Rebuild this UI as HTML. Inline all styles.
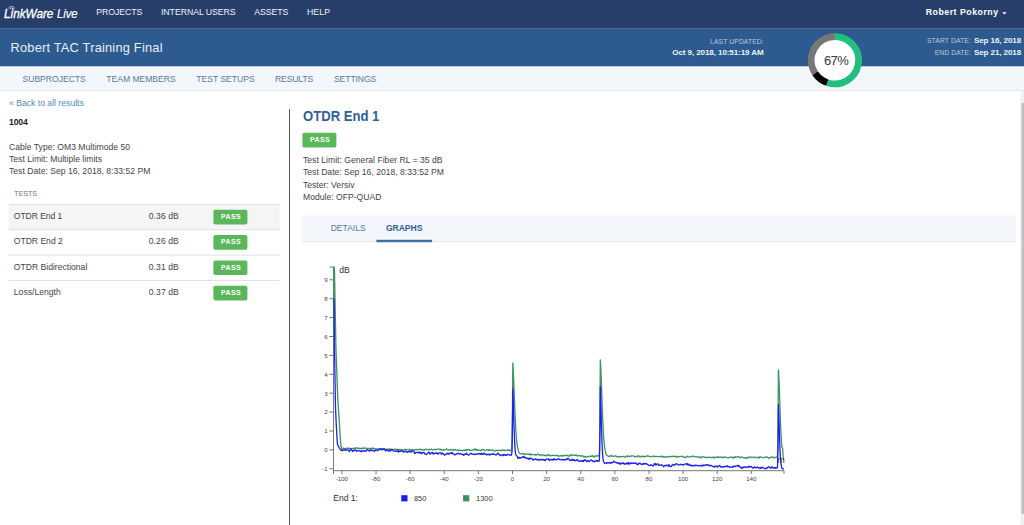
<!DOCTYPE html><html><head><meta charset="utf-8"><title>LinkWare Live</title><style>
html,body{margin:0;padding:0}
body{width:1024px;height:525px;overflow:hidden;background:#fff;position:relative;font-family:"Liberation Sans", sans-serif;}
.t{position:absolute;display:block;white-space:nowrap;line-height:1;margin:0;padding:0}
header,section,nav,aside,main,figure{display:block;margin:0;padding:0;position:static}
.b{position:absolute}

</style></head><body>
<svg class="b" style="left:0;top:0" width="1024" height="525" viewBox="0 0 1024 525" shape-rendering="geometricPrecision"><rect x="0.00" y="0.00" width="1024.00" height="28.75" fill="#283e6a"/><rect x="0.00" y="28.75" width="1024.00" height="37.65" fill="#2d5b8f"/><rect x="0.00" y="65.60" width="1024.00" height="0.80" fill="#2a568a"/><rect x="0.00" y="66.40" width="1024.00" height="23.80" fill="#f3f6fa"/><rect x="0.00" y="90.20" width="1024.00" height="0.80" fill="#dde3ed"/><rect x="1020.60" y="91.00" width="3.40" height="434.00" fill="#f1f1f1"/><rect x="1021.40" y="103.10" width="2.60" height="410.90" fill="#c2c0c0"/><rect x="289.05" y="109.10" width="0.95" height="415.90" fill="#4a4a4a"/><rect x="8.80" y="204.50" width="271.00" height="25.30" fill="#f5f5f5"/><rect x="8.80" y="204.10" width="271.00" height="0.80" fill="#dadada"/><rect x="8.80" y="229.40" width="271.00" height="0.80" fill="#dadada"/><rect x="8.80" y="254.70" width="271.00" height="0.80" fill="#dadada"/><rect x="8.80" y="280.00" width="271.00" height="0.80" fill="#dadada"/><rect x="213.40" y="209.80" width="34.00" height="14.70" fill="#5bb75b" rx="1.8"/><rect x="213.40" y="235.10" width="34.00" height="14.70" fill="#5bb75b" rx="1.8"/><rect x="213.40" y="260.40" width="34.00" height="14.70" fill="#5bb75b" rx="1.8"/><rect x="213.40" y="285.70" width="34.00" height="14.70" fill="#5bb75b" rx="1.8"/><rect x="302.40" y="132.80" width="34.00" height="14.70" fill="#5bb75b" rx="1.8"/><rect x="302.30" y="215.50" width="713.80" height="25.80" fill="#f3f6fa"/><rect x="302.30" y="241.30" width="713.80" height="0.70" fill="#dde3ed"/><rect x="376.40" y="239.80" width="55.70" height="2.40" fill="#3d6fa6"/></svg>
<svg class="b" style="left:0;top:0" width="1024" height="525" viewBox="0 0 1024 525"><circle cx="834.9" cy="60.2" r="26.5" fill="#fff"/><path d="M834.90 36.55 A23.65 23.65 0 1 1 827.20 82.56" fill="none" stroke="#21bf7f" stroke-width="6.7"/><path d="M827.20 82.56 A23.65 23.65 0 0 1 815.07 73.08" fill="none" stroke="#000" stroke-width="6.7"/><path d="M815.07 73.08 A23.65 23.65 0 0 1 834.90 36.55" fill="none" stroke="#777" stroke-width="6.7"/><path d="M1002.2 12.3 L1006.6 12.3 L1004.4 14.6 Z" fill="#fff"/><path d="M8.3 8.4 Q11.6 4.4 14.9 8.4" fill="none" stroke="#fff" stroke-opacity="0.85" stroke-width="0.8"/><path d="M9.7 9.1 Q11.6 6.7 13.5 9.1" fill="none" stroke="#fff" stroke-opacity="0.85" stroke-width="0.8"/><path d="M333.5 267 V471 M333.5 470.7 H784" stroke="#777" stroke-width="1" fill="none"/><path d="M329.3 468.8 H333.5 M329.3 449.9 H333.5 M329.3 431.0 H333.5 M329.3 412.1 H333.5 M329.3 393.2 H333.5 M329.3 374.3 H333.5 M329.3 355.4 H333.5 M329.3 336.5 H333.5 M329.3 317.6 H333.5 M329.3 298.7 H333.5 M329.3 279.8 H333.5 M329.5 267 H333.5 M341.9 470.7 V474 M376.0 470.7 V474 M410.1 470.7 V474 M444.3 470.7 V474 M478.4 470.7 V474 M512.5 470.7 V474 M546.6 470.7 V474 M580.7 470.7 V474 M614.9 470.7 V474 M649.0 470.7 V474 M683.1 470.7 V474 M717.2 470.7 V474 M751.3 470.7 V474 M784 470.7 V474 M333.5 470.7 V474" stroke="#777" stroke-width="1" fill="none"/><path d="M333.9 335.0 L333.9 267.0 L334.0 267.0 L334.5 270.0 L335.0 300.0 L335.5 325.0 L336.0 350.0 L336.5 364.1 L337.0 378.1 L337.5 392.2 L338.0 401.3 L338.5 409.2 L339.0 417.1 L339.5 425.0 L340.0 432.9 L340.5 440.8 L341.0 446.1 L341.5 447.5 L342.0 449.5 L342.5 449.4 L343.0 448.0 L343.5 448.2 L344.0 448.5 L344.5 448.6 L345.0 448.7 L345.5 448.6 L346.0 448.2 L346.5 448.3 L347.0 448.3 L347.5 448.3 L348.0 448.1 L348.5 448.5 L349.0 448.4 L349.5 448.2 L350.0 448.3 L350.5 448.5 L351.0 448.7 L351.5 449.2 L352.0 448.8 L352.5 448.5 L353.0 448.3 L353.5 448.4 L354.0 448.0 L354.5 448.5 L355.0 448.4 L355.5 448.3 L356.0 447.6 L356.5 447.9 L357.0 448.2 L357.5 448.4 L358.0 448.1 L358.5 448.2 L359.0 448.5 L359.5 448.2 L360.0 449.0 L360.5 448.7 L361.0 448.2 L361.5 448.4 L362.0 448.7 L362.5 448.3 L363.0 448.2 L363.5 448.6 L364.0 447.8 L364.5 448.1 L365.0 448.2 L365.5 448.6 L366.0 448.3 L366.5 448.1 L367.0 448.9 L367.5 449.0 L368.0 448.6 L368.5 448.4 L369.0 448.6 L369.5 448.4 L370.0 448.7 L370.5 449.0 L371.0 448.3 L371.5 448.7 L372.0 448.6 L372.5 447.9 L373.0 448.7 L373.5 448.3 L374.0 449.1 L374.5 449.2 L375.0 448.6 L375.5 448.8 L376.0 448.9 L376.5 448.9 L377.0 449.2 L377.5 448.6 L378.0 449.2 L378.5 448.9 L379.0 449.3 L379.5 449.6 L380.0 449.0 L380.5 448.4 L381.0 448.8 L381.5 449.1 L382.0 449.7 L382.5 449.0 L383.0 448.6 L383.5 449.1 L384.0 449.3 L384.5 449.9 L385.0 449.7 L385.5 449.6 L386.0 449.3 L386.5 448.9 L387.0 449.7 L387.5 449.6 L388.0 449.2 L388.5 449.0 L389.0 448.9 L389.5 449.4 L390.0 449.0 L390.5 448.9 L391.0 449.5 L391.5 449.5 L392.0 449.7 L392.5 449.4 L393.0 449.7 L393.5 449.7 L394.0 449.2 L394.5 449.2 L395.0 449.2 L395.5 449.4 L396.0 449.5 L396.5 449.3 L397.0 449.3 L397.5 449.3 L398.0 449.2 L398.5 449.6 L399.0 449.9 L399.5 449.6 L400.0 449.7 L400.5 449.9 L401.0 449.4 L401.5 449.6 L402.0 449.6 L402.5 449.8 L403.0 450.2 L403.5 450.4 L404.0 449.9 L404.5 449.4 L405.0 449.2 L405.5 450.0 L406.0 450.1 L406.5 449.6 L407.0 449.3 L407.5 449.7 L408.0 450.0 L408.5 450.3 L409.0 449.9 L409.5 449.0 L410.0 449.9 L410.5 450.1 L411.0 449.8 L411.5 449.4 L412.0 450.1 L412.5 450.0 L413.0 449.9 L413.5 449.8 L414.0 450.0 L414.5 449.7 L415.0 450.2 L415.5 449.8 L416.0 449.4 L416.5 449.5 L417.0 449.4 L417.5 449.6 L418.0 449.9 L418.5 449.6 L419.0 449.7 L419.5 449.4 L420.0 449.3 L420.5 449.1 L421.0 449.5 L421.5 450.0 L422.0 449.9 L422.5 449.4 L423.0 450.0 L423.5 450.2 L424.0 450.0 L424.5 450.2 L425.0 449.3 L425.5 449.5 L426.0 449.3 L426.5 449.3 L427.0 449.7 L427.5 449.5 L428.0 449.4 L428.5 449.5 L429.0 449.5 L429.5 449.7 L430.0 449.9 L430.5 449.3 L431.0 449.1 L431.5 449.2 L432.0 449.7 L432.5 449.8 L433.0 449.8 L433.5 449.4 L434.0 449.7 L434.5 449.4 L435.0 449.4 L435.5 449.6 L436.0 449.5 L436.5 449.7 L437.0 449.2 L437.5 449.2 L438.0 449.1 L438.5 449.2 L439.0 449.1 L439.5 449.2 L440.0 449.7 L440.5 449.3 L441.0 449.8 L441.5 449.5 L442.0 450.1 L442.5 450.3 L443.0 449.9 L443.5 449.7 L444.0 450.0 L444.5 450.0 L445.0 449.7 L445.5 449.3 L446.0 449.4 L446.5 448.8 L447.0 449.7 L447.5 449.8 L448.0 450.1 L448.5 449.9 L449.0 450.1 L449.5 449.7 L450.0 449.8 L450.5 449.7 L451.0 449.8 L451.5 449.4 L452.0 449.9 L452.5 450.2 L453.0 450.5 L453.5 449.7 L454.0 449.7 L454.5 450.0 L455.0 449.9 L455.5 449.5 L456.0 450.1 L456.5 450.2 L457.0 450.3 L457.5 450.4 L458.0 450.0 L458.5 450.5 L459.0 450.1 L459.5 450.3 L460.0 450.6 L460.5 450.7 L461.0 450.1 L461.5 450.4 L462.0 450.3 L462.5 450.8 L463.0 450.5 L463.5 450.2 L464.0 450.3 L464.5 450.1 L465.0 450.5 L465.5 449.9 L466.0 449.6 L466.5 449.8 L467.0 450.5 L467.5 449.6 L468.0 449.6 L468.5 449.6 L469.0 449.9 L469.5 449.7 L470.0 450.3 L470.5 450.3 L471.0 450.5 L471.5 450.3 L472.0 450.2 L472.5 450.1 L473.0 449.6 L473.5 450.2 L474.0 450.1 L474.5 449.2 L475.0 448.8 L475.5 449.6 L476.0 449.4 L476.5 450.4 L477.0 450.3 L477.5 449.5 L478.0 449.9 L478.5 450.2 L479.0 450.1 L479.5 450.2 L480.0 450.5 L480.5 450.5 L481.0 450.6 L481.5 450.3 L482.0 449.4 L482.5 449.8 L483.0 449.4 L483.5 449.7 L484.0 450.0 L484.5 450.3 L485.0 450.7 L485.5 450.5 L486.0 450.2 L486.5 449.7 L487.0 449.8 L487.5 449.9 L488.0 450.1 L488.5 450.3 L489.0 449.7 L489.5 450.4 L490.0 450.4 L490.5 450.1 L491.0 450.2 L491.5 450.0 L492.0 450.0 L492.5 450.1 L493.0 450.4 L493.5 450.3 L494.0 451.0 L494.5 450.9 L495.0 450.8 L495.5 450.9 L496.0 450.1 L496.5 450.1 L497.0 450.6 L497.5 450.7 L498.0 450.6 L498.5 450.3 L499.0 450.1 L499.5 450.4 L500.0 450.4 L500.5 450.7 L501.0 450.6 L501.5 450.7 L502.0 449.9 L502.5 449.9 L503.0 450.1 L503.5 450.4 L504.0 449.9 L504.5 450.1 L505.0 450.4 L505.5 450.6 L506.0 450.3 L506.5 450.3 L507.0 450.2 L507.5 449.9 L508.0 450.0 L508.5 449.8 L509.0 450.5 L509.5 450.0 L510.0 450.2 L510.5 450.9 L511.0 450.6 L511.5 450.7 L512.0 445.8 L512.5 407.6 L512.8 363.0 L513.0 365.1 L513.5 375.0 L514.0 388.0 L514.5 401.2 L515.0 413.8 L515.5 424.4 L516.0 432.8 L516.5 439.2 L517.0 443.8 L517.5 447.1 L518.0 449.1 L518.5 451.5 L519.0 452.3 L519.5 453.1 L520.0 453.7 L520.5 453.9 L521.0 453.8 L521.5 454.0 L522.0 453.7 L522.5 453.4 L523.0 453.7 L523.5 453.5 L524.0 454.5 L524.5 454.2 L525.0 454.1 L525.5 454.0 L526.0 454.3 L526.5 454.2 L527.0 453.9 L527.5 454.1 L528.0 454.1 L528.5 454.1 L529.0 454.0 L529.5 455.0 L530.0 454.9 L530.5 453.9 L531.0 454.1 L531.5 454.7 L532.0 454.6 L532.5 454.7 L533.0 454.3 L533.5 454.7 L534.0 454.8 L534.5 454.6 L535.0 454.7 L535.5 454.5 L536.0 455.4 L536.5 455.2 L537.0 454.6 L537.5 454.1 L538.0 454.2 L538.5 454.3 L539.0 454.7 L539.5 455.2 L540.0 454.7 L540.5 454.8 L541.0 454.9 L541.5 455.0 L542.0 455.1 L542.5 455.6 L543.0 455.0 L543.5 455.2 L544.0 455.0 L544.5 455.6 L545.0 455.7 L545.5 455.1 L546.0 455.9 L546.5 455.4 L547.0 455.0 L547.5 455.3 L548.0 455.6 L548.5 454.5 L549.0 454.9 L549.5 455.4 L550.0 455.6 L550.5 455.6 L551.0 455.8 L551.5 455.6 L552.0 455.6 L552.5 455.1 L553.0 455.4 L553.5 455.4 L554.0 455.4 L554.5 455.8 L555.0 455.5 L555.5 455.4 L556.0 455.3 L556.5 455.3 L557.0 455.6 L557.5 455.3 L558.0 456.0 L558.5 455.9 L559.0 456.0 L559.5 456.0 L560.0 456.2 L560.5 455.5 L561.0 455.9 L561.5 455.6 L562.0 455.9 L562.5 455.5 L563.0 456.2 L563.5 455.9 L564.0 455.5 L564.5 455.3 L565.0 455.7 L565.5 455.3 L566.0 455.1 L566.5 455.6 L567.0 455.3 L567.5 455.6 L568.0 455.4 L568.5 456.0 L569.0 456.1 L569.5 456.1 L570.0 455.1 L570.5 454.7 L571.0 455.4 L571.5 455.7 L572.0 454.9 L572.5 455.1 L573.0 454.8 L573.5 455.2 L574.0 455.2 L574.5 455.3 L575.0 455.5 L575.5 455.3 L576.0 454.7 L576.5 455.3 L577.0 455.8 L577.5 456.0 L578.0 455.8 L578.5 455.6 L579.0 455.4 L579.5 455.7 L580.0 455.9 L580.5 456.1 L581.0 456.0 L581.5 456.0 L582.0 455.5 L582.5 455.9 L583.0 456.3 L583.5 456.2 L584.0 457.1 L584.5 456.4 L585.0 456.5 L585.5 457.0 L586.0 457.0 L586.5 457.2 L587.0 456.7 L587.5 456.7 L588.0 456.6 L588.5 456.5 L589.0 456.5 L589.5 456.2 L590.0 456.5 L590.5 455.9 L591.0 456.3 L591.5 456.3 L592.0 456.2 L592.5 455.6 L593.0 456.3 L593.5 456.8 L594.0 456.4 L594.5 457.0 L595.0 456.1 L595.5 455.8 L596.0 456.0 L596.5 456.0 L597.0 456.1 L597.5 455.7 L598.0 456.1 L598.5 456.2 L599.0 455.5 L599.5 451.5 L600.0 411.6 L600.3 359.9 L600.5 362.0 L601.0 372.3 L601.5 386.1 L602.0 400.7 L602.5 413.8 L603.0 425.3 L603.5 434.4 L604.0 441.3 L604.5 446.4 L605.0 449.7 L605.5 452.0 L606.0 454.0 L606.5 455.0 L607.0 455.4 L607.5 455.9 L608.0 455.9 L608.5 456.4 L609.0 456.7 L609.5 456.2 L610.0 456.2 L610.5 455.9 L611.0 456.1 L611.5 455.3 L612.0 456.1 L612.5 456.2 L613.0 456.5 L613.5 456.3 L614.0 456.0 L614.5 456.1 L615.0 456.2 L615.5 455.8 L616.0 455.9 L616.5 456.5 L617.0 456.8 L617.5 456.6 L618.0 456.9 L618.5 456.8 L619.0 456.5 L619.5 457.0 L620.0 456.9 L620.5 456.4 L621.0 456.4 L621.5 456.6 L622.0 457.0 L622.5 456.7 L623.0 456.5 L623.5 456.3 L624.0 456.5 L624.5 456.9 L625.0 457.4 L625.5 456.9 L626.0 456.3 L626.5 456.7 L627.0 456.6 L627.5 455.8 L628.0 456.5 L628.5 456.4 L629.0 456.2 L629.5 456.1 L630.0 456.6 L630.5 456.5 L631.0 455.9 L631.5 456.0 L632.0 455.8 L632.5 455.9 L633.0 455.8 L633.5 456.2 L634.0 456.2 L634.5 456.8 L635.0 456.5 L635.5 456.9 L636.0 456.5 L636.5 456.3 L637.0 456.6 L637.5 456.6 L638.0 455.5 L638.5 456.0 L639.0 456.1 L639.5 456.5 L640.0 457.2 L640.5 457.1 L641.0 456.4 L641.5 456.1 L642.0 456.4 L642.5 456.6 L643.0 456.3 L643.5 456.2 L644.0 456.8 L644.5 457.0 L645.0 456.6 L645.5 456.3 L646.0 456.2 L646.5 456.1 L647.0 456.3 L647.5 455.8 L648.0 455.9 L648.5 456.2 L649.0 456.4 L649.5 456.4 L650.0 456.3 L650.5 456.8 L651.0 456.7 L651.5 456.7 L652.0 456.3 L652.5 456.4 L653.0 456.4 L653.5 456.6 L654.0 455.9 L654.5 456.3 L655.0 456.5 L655.5 456.6 L656.0 456.3 L656.5 456.4 L657.0 456.5 L657.5 456.6 L658.0 456.7 L658.5 456.8 L659.0 456.5 L659.5 456.5 L660.0 456.7 L660.5 456.5 L661.0 456.5 L661.5 456.5 L662.0 456.0 L662.5 456.8 L663.0 456.4 L663.5 457.0 L664.0 456.7 L664.5 457.2 L665.0 456.9 L665.5 457.0 L666.0 457.2 L666.5 456.7 L667.0 456.9 L667.5 456.8 L668.0 457.0 L668.5 456.5 L669.0 456.5 L669.5 456.7 L670.0 456.3 L670.5 456.6 L671.0 456.6 L671.5 456.8 L672.0 456.4 L672.5 456.1 L673.0 456.7 L673.5 456.7 L674.0 456.4 L674.5 456.2 L675.0 456.4 L675.5 456.3 L676.0 457.1 L676.5 457.1 L677.0 456.4 L677.5 456.9 L678.0 457.1 L678.5 456.9 L679.0 456.6 L679.5 456.6 L680.0 456.3 L680.5 456.5 L681.0 456.4 L681.5 456.4 L682.0 456.6 L682.5 456.2 L683.0 456.6 L683.5 457.1 L684.0 457.4 L684.5 457.7 L685.0 457.0 L685.5 457.2 L686.0 457.1 L686.5 457.1 L687.0 456.4 L687.5 456.2 L688.0 456.8 L688.5 456.9 L689.0 456.9 L689.5 456.8 L690.0 456.8 L690.5 456.9 L691.0 456.7 L691.5 456.3 L692.0 456.1 L692.5 456.4 L693.0 456.1 L693.5 456.3 L694.0 456.4 L694.5 456.5 L695.0 456.7 L695.5 456.8 L696.0 457.0 L696.5 456.7 L697.0 457.1 L697.5 457.2 L698.0 456.9 L698.5 456.7 L699.0 457.0 L699.5 457.0 L700.0 457.8 L700.5 457.4 L701.0 457.5 L701.5 457.6 L702.0 456.7 L702.5 456.5 L703.0 456.8 L703.5 457.0 L704.0 456.9 L704.5 457.1 L705.0 457.5 L705.5 457.5 L706.0 457.3 L706.5 457.3 L707.0 457.8 L707.5 457.2 L708.0 457.5 L708.5 457.4 L709.0 457.3 L709.5 457.1 L710.0 457.4 L710.5 457.4 L711.0 457.6 L711.5 457.7 L712.0 457.4 L712.5 457.5 L713.0 457.3 L713.5 457.1 L714.0 457.0 L714.5 458.2 L715.0 457.5 L715.5 457.7 L716.0 457.4 L716.5 456.9 L717.0 457.4 L717.5 457.3 L718.0 456.7 L718.5 457.5 L719.0 457.4 L719.5 457.2 L720.0 457.1 L720.5 457.4 L721.0 457.4 L721.5 457.0 L722.0 457.0 L722.5 457.7 L723.0 457.4 L723.5 457.7 L724.0 457.3 L724.5 457.2 L725.0 456.9 L725.5 457.2 L726.0 457.2 L726.5 457.5 L727.0 457.6 L727.5 457.9 L728.0 457.9 L728.5 457.8 L729.0 457.4 L729.5 457.1 L730.0 457.2 L730.5 457.4 L731.0 457.5 L731.5 457.3 L732.0 457.5 L732.5 457.1 L733.0 457.4 L733.5 458.2 L734.0 457.5 L734.5 457.5 L735.0 456.5 L735.5 457.4 L736.0 457.1 L736.5 457.1 L737.0 457.0 L737.5 456.7 L738.0 456.6 L738.5 456.6 L739.0 457.0 L739.5 457.2 L740.0 457.7 L740.5 457.2 L741.0 457.6 L741.5 456.9 L742.0 457.2 L742.5 457.4 L743.0 457.5 L743.5 457.8 L744.0 457.6 L744.5 457.8 L745.0 458.0 L745.5 457.6 L746.0 458.4 L746.5 458.0 L747.0 458.1 L747.5 458.3 L748.0 457.1 L748.5 457.5 L749.0 457.3 L749.5 456.9 L750.0 457.1 L750.5 457.2 L751.0 457.1 L751.5 457.2 L752.0 457.7 L752.5 457.5 L753.0 457.5 L753.5 457.1 L754.0 457.2 L754.5 457.2 L755.0 457.0 L755.5 457.9 L756.0 457.7 L756.5 457.7 L757.0 457.3 L757.5 457.1 L758.0 457.1 L758.5 457.7 L759.0 458.2 L759.5 457.0 L760.0 457.0 L760.5 456.9 L761.0 456.9 L761.5 457.1 L762.0 457.3 L762.5 457.5 L763.0 457.9 L763.5 457.6 L764.0 457.7 L764.5 457.5 L765.0 457.1 L765.5 457.4 L766.0 456.9 L766.5 457.2 L767.0 457.4 L767.5 457.1 L768.0 457.7 L768.5 457.8 L769.0 458.3 L769.5 458.1 L770.0 457.6 L770.5 457.4 L771.0 457.2 L771.5 457.3 L772.0 456.9 L772.5 457.1 L773.0 457.2 L773.5 457.4 L774.0 458.0 L774.5 457.6 L775.0 457.5 L775.5 457.4 L776.0 457.1 L776.5 457.3 L777.0 457.1 L777.5 456.2 L778.0 431.4 L778.4 369.9 L778.5 370.6 L779.0 380.3 L779.5 394.4 L780.0 409.3 L780.5 422.9 L781.0 433.8 L781.5 442.1 L782.0 447.6 L782.6 448.0 L783.1 456.0 L783.6 460.5" fill="none" stroke="#3d9463" stroke-width="1.3" stroke-linejoin="round"/><path d="M334.0 299.0 L334.5 350.0 L335.0 378.2 L335.5 406.4 L336.0 419.5 L336.5 428.9 L337.0 438.4 L337.5 444.4 L338.0 445.4 L338.5 446.4 L339.0 447.3 L339.5 448.3 L340.0 449.3 L340.5 449.4 L341.0 450.3 L341.5 450.1 L342.0 450.7 L342.5 450.7 L343.0 450.5 L343.5 450.0 L344.0 449.8 L344.5 449.6 L345.0 449.3 L345.5 450.4 L346.0 450.3 L346.5 450.1 L347.0 449.9 L347.5 449.9 L348.0 449.8 L348.5 449.8 L349.0 451.0 L349.5 451.7 L350.0 450.1 L350.5 449.6 L351.0 448.8 L351.5 450.1 L352.0 450.0 L352.5 451.6 L353.0 451.2 L353.5 450.5 L354.0 450.4 L354.5 450.7 L355.0 449.7 L355.5 450.0 L356.0 450.5 L356.5 451.4 L357.0 450.9 L357.5 450.4 L358.0 450.8 L358.5 450.4 L359.0 450.8 L359.5 451.2 L360.0 451.3 L360.5 451.1 L361.0 451.0 L361.5 451.8 L362.0 450.8 L362.5 451.0 L363.0 450.7 L363.5 450.6 L364.0 451.3 L364.5 450.9 L365.0 451.3 L365.5 451.0 L366.0 451.3 L366.5 450.2 L367.0 449.9 L367.5 449.7 L368.0 450.1 L368.5 450.4 L369.0 450.7 L369.5 451.2 L370.0 451.0 L370.5 449.7 L371.0 449.7 L371.5 450.0 L372.0 450.6 L372.5 450.6 L373.0 450.7 L373.5 450.7 L374.0 451.1 L374.5 451.3 L375.0 450.7 L375.5 450.1 L376.0 450.0 L376.5 450.2 L377.0 450.3 L377.5 450.7 L378.0 450.2 L378.5 450.0 L379.0 449.4 L379.5 448.9 L380.0 449.5 L380.5 449.1 L381.0 448.8 L381.5 449.8 L382.0 449.9 L382.5 449.4 L383.0 448.8 L383.5 449.1 L384.0 448.8 L384.5 448.7 L385.0 449.9 L385.5 450.7 L386.0 450.2 L386.5 450.6 L387.0 450.3 L387.5 450.1 L388.0 450.5 L388.5 451.0 L389.0 450.5 L389.5 450.8 L390.0 450.9 L390.5 451.0 L391.0 449.5 L391.5 449.6 L392.0 450.1 L392.5 449.9 L393.0 450.6 L393.5 451.1 L394.0 451.2 L394.5 451.2 L395.0 450.9 L395.5 451.2 L396.0 451.3 L396.5 451.4 L397.0 451.0 L397.5 450.5 L398.0 451.2 L398.5 452.2 L399.0 451.1 L399.5 451.4 L400.0 451.2 L400.5 451.4 L401.0 450.9 L401.5 450.4 L402.0 451.2 L402.5 451.4 L403.0 451.6 L403.5 452.2 L404.0 452.2 L404.5 451.4 L405.0 451.0 L405.5 451.3 L406.0 451.5 L406.5 451.9 L407.0 452.3 L407.5 451.8 L408.0 452.2 L408.5 451.8 L409.0 451.5 L409.5 451.5 L410.0 451.3 L410.5 452.1 L411.0 452.2 L411.5 451.1 L412.0 450.7 L412.5 451.1 L413.0 451.4 L413.5 451.1 L414.0 451.9 L414.5 453.5 L415.0 453.7 L415.5 452.7 L416.0 452.6 L416.5 452.4 L417.0 452.3 L417.5 452.5 L418.0 452.4 L418.5 452.3 L419.0 453.0 L419.5 452.7 L420.0 452.0 L420.5 452.5 L421.0 453.6 L421.5 453.8 L422.0 452.7 L422.5 453.0 L423.0 452.6 L423.5 452.5 L424.0 452.3 L424.5 453.7 L425.0 453.7 L425.5 454.2 L426.0 454.2 L426.5 454.6 L427.0 453.8 L427.5 453.4 L428.0 453.0 L428.5 452.1 L429.0 452.1 L429.5 452.7 L430.0 454.2 L430.5 453.7 L431.0 453.3 L431.5 452.8 L432.0 452.4 L432.5 452.6 L433.0 454.1 L433.5 453.6 L434.0 453.0 L434.5 453.7 L435.0 453.6 L435.5 453.1 L436.0 453.3 L436.5 453.3 L437.0 452.8 L437.5 453.8 L438.0 454.1 L438.5 454.1 L439.0 453.0 L439.5 452.8 L440.0 452.5 L440.5 452.8 L441.0 453.2 L441.5 454.3 L442.0 453.3 L442.5 453.1 L443.0 453.3 L443.5 454.5 L444.0 454.5 L444.5 455.1 L445.0 454.9 L445.5 454.7 L446.0 454.3 L446.5 453.5 L447.0 453.5 L447.5 453.9 L448.0 453.0 L448.5 453.9 L449.0 453.7 L449.5 454.0 L450.0 453.3 L450.5 453.2 L451.0 452.8 L451.5 453.3 L452.0 452.4 L452.5 453.8 L453.0 453.6 L453.5 454.0 L454.0 454.2 L454.5 454.9 L455.0 454.5 L455.5 454.6 L456.0 454.4 L456.5 454.0 L457.0 453.6 L457.5 453.6 L458.0 453.1 L458.5 453.7 L459.0 453.9 L459.5 454.1 L460.0 453.8 L460.5 453.4 L461.0 453.8 L461.5 454.0 L462.0 454.5 L462.5 454.3 L463.0 454.5 L463.5 455.3 L464.0 454.2 L464.5 454.7 L465.0 454.2 L465.5 454.3 L466.0 454.1 L466.5 453.0 L467.0 454.4 L467.5 454.4 L468.0 454.8 L468.5 455.1 L469.0 454.9 L469.5 454.5 L470.0 454.0 L470.5 453.3 L471.0 453.3 L471.5 453.6 L472.0 454.2 L472.5 454.2 L473.0 454.0 L473.5 454.0 L474.0 454.4 L474.5 454.4 L475.0 454.7 L475.5 454.0 L476.0 454.2 L476.5 454.3 L477.0 454.0 L477.5 454.1 L478.0 453.8 L478.5 453.6 L479.0 453.7 L479.5 453.6 L480.0 454.4 L480.5 454.3 L481.0 453.5 L481.5 453.2 L482.0 454.5 L482.5 453.9 L483.0 454.2 L483.5 453.4 L484.0 453.2 L484.5 454.3 L485.0 454.0 L485.5 454.4 L486.0 454.4 L486.5 454.8 L487.0 454.1 L487.5 454.6 L488.0 454.5 L488.5 454.4 L489.0 454.2 L489.5 455.1 L490.0 454.7 L490.5 454.2 L491.0 454.2 L491.5 454.2 L492.0 454.5 L492.5 454.5 L493.0 453.7 L493.5 453.9 L494.0 454.1 L494.5 454.3 L495.0 454.7 L495.5 454.7 L496.0 455.0 L496.5 454.8 L497.0 454.2 L497.5 453.2 L498.0 453.4 L498.5 453.6 L499.0 454.5 L499.5 454.4 L500.0 455.5 L500.5 455.7 L501.0 455.3 L501.5 454.9 L502.0 454.8 L502.5 455.1 L503.0 455.7 L503.5 454.4 L504.0 455.0 L504.5 454.4 L505.0 455.0 L505.5 455.0 L506.0 455.6 L506.5 455.0 L507.0 455.0 L507.5 454.3 L508.0 454.7 L508.5 454.7 L509.0 454.6 L509.5 455.0 L510.0 455.2 L510.5 455.3 L511.0 454.9 L511.5 455.0 L512.0 451.8 L512.5 422.7 L512.8 388.8 L513.0 392.8 L513.5 408.7 L514.0 425.8 L514.5 439.1 L515.0 448.1 L515.5 453.6 L516.0 455.1 L516.5 455.6 L517.0 456.1 L517.5 456.8 L518.0 458.6 L518.5 458.2 L519.0 457.4 L519.5 457.4 L520.0 458.0 L520.5 458.0 L521.0 457.6 L521.5 457.8 L522.0 457.1 L522.5 457.1 L523.0 456.7 L523.5 457.4 L524.0 456.2 L524.5 457.3 L525.0 457.8 L525.5 458.0 L526.0 457.5 L526.5 458.3 L527.0 458.5 L527.5 458.5 L528.0 458.2 L528.5 459.1 L529.0 458.4 L529.5 459.1 L530.0 458.3 L530.5 457.9 L531.0 458.6 L531.5 458.7 L532.0 458.6 L532.5 459.2 L533.0 460.1 L533.5 459.6 L534.0 459.6 L534.5 459.7 L535.0 458.9 L535.5 458.9 L536.0 459.4 L536.5 459.2 L537.0 459.8 L537.5 459.7 L538.0 459.9 L538.5 460.1 L539.0 459.4 L539.5 459.8 L540.0 460.0 L540.5 460.1 L541.0 459.5 L541.5 459.4 L542.0 459.7 L542.5 459.9 L543.0 459.5 L543.5 459.5 L544.0 460.2 L544.5 459.8 L545.0 460.5 L545.5 460.4 L546.0 459.3 L546.5 459.1 L547.0 459.0 L547.5 459.3 L548.0 459.4 L548.5 459.0 L549.0 460.1 L549.5 460.5 L550.0 459.7 L550.5 459.4 L551.0 459.4 L551.5 459.6 L552.0 460.0 L552.5 459.3 L553.0 459.5 L553.5 460.0 L554.0 458.7 L554.5 458.8 L555.0 459.7 L555.5 459.6 L556.0 459.6 L556.5 459.8 L557.0 459.3 L557.5 459.4 L558.0 459.0 L558.5 459.1 L559.0 459.0 L559.5 459.2 L560.0 459.8 L560.5 459.8 L561.0 459.5 L561.5 459.6 L562.0 459.6 L562.5 459.8 L563.0 459.4 L563.5 459.7 L564.0 460.0 L564.5 460.0 L565.0 460.0 L565.5 459.4 L566.0 459.3 L566.5 458.9 L567.0 459.5 L567.5 458.9 L568.0 458.2 L568.5 458.7 L569.0 459.0 L569.5 460.0 L570.0 460.5 L570.5 460.2 L571.0 460.5 L571.5 459.4 L572.0 460.1 L572.5 459.4 L573.0 459.4 L573.5 460.4 L574.0 460.4 L574.5 459.7 L575.0 460.8 L575.5 460.7 L576.0 460.6 L576.5 460.3 L577.0 459.5 L577.5 459.6 L578.0 460.5 L578.5 460.8 L579.0 461.5 L579.5 461.3 L580.0 461.0 L580.5 460.9 L581.0 460.6 L581.5 461.1 L582.0 461.5 L582.5 460.8 L583.0 460.4 L583.5 461.4 L584.0 460.2 L584.5 459.9 L585.0 459.7 L585.5 460.4 L586.0 460.7 L586.5 461.6 L587.0 461.3 L587.5 460.6 L588.0 460.5 L588.5 461.4 L589.0 461.6 L589.5 461.3 L590.0 460.8 L590.5 460.2 L591.0 460.1 L591.5 460.2 L592.0 460.8 L592.5 460.7 L593.0 461.6 L593.5 461.5 L594.0 461.2 L594.5 461.8 L595.0 461.4 L595.5 460.9 L596.0 460.5 L596.5 460.6 L597.0 461.3 L597.5 460.5 L598.0 460.9 L598.5 461.2 L599.0 461.3 L599.5 458.3 L600.0 427.4 L600.3 386.7 L600.5 390.4 L601.0 407.9 L601.5 427.4 L602.0 442.6 L602.5 452.5 L603.0 458.8 L603.5 461.5 L604.0 462.5 L604.5 463.3 L605.0 463.0 L605.5 463.1 L606.0 463.1 L606.5 463.5 L607.0 462.7 L607.5 462.7 L608.0 462.9 L608.5 462.7 L609.0 462.8 L609.5 462.7 L610.0 462.8 L610.5 463.4 L611.0 462.5 L611.5 462.4 L612.0 462.9 L612.5 462.7 L613.0 462.4 L613.5 461.3 L614.0 461.1 L614.5 461.7 L615.0 462.1 L615.5 462.5 L616.0 462.4 L616.5 462.7 L617.0 463.0 L617.5 462.6 L618.0 463.5 L618.5 463.5 L619.0 462.9 L619.5 463.6 L620.0 463.2 L620.5 464.2 L621.0 463.2 L621.5 463.7 L622.0 463.2 L622.5 463.3 L623.0 463.1 L623.5 462.8 L624.0 464.0 L624.5 463.7 L625.0 464.3 L625.5 463.8 L626.0 463.6 L626.5 463.7 L627.0 462.8 L627.5 463.8 L628.0 464.0 L628.5 462.4 L629.0 463.9 L629.5 464.1 L630.0 463.6 L630.5 462.9 L631.0 463.4 L631.5 463.0 L632.0 463.5 L632.5 463.2 L633.0 462.8 L633.5 463.0 L634.0 463.4 L634.5 463.2 L635.0 463.1 L635.5 463.4 L636.0 463.1 L636.5 464.0 L637.0 464.4 L637.5 464.0 L638.0 464.7 L638.5 464.2 L639.0 463.1 L639.5 463.2 L640.0 463.3 L640.5 463.3 L641.0 464.2 L641.5 464.6 L642.0 464.7 L642.5 463.7 L643.0 464.0 L643.5 464.0 L644.0 463.3 L644.5 463.3 L645.0 464.1 L645.5 463.6 L646.0 464.0 L646.5 463.7 L647.0 464.0 L647.5 464.4 L648.0 464.8 L648.5 465.3 L649.0 465.4 L649.5 465.6 L650.0 465.4 L650.5 464.8 L651.0 464.6 L651.5 465.2 L652.0 465.6 L652.5 465.6 L653.0 466.0 L653.5 465.4 L654.0 463.9 L654.5 464.5 L655.0 463.3 L655.5 464.4 L656.0 465.2 L656.5 464.2 L657.0 464.0 L657.5 463.9 L658.0 463.9 L658.5 464.9 L659.0 465.5 L659.5 465.1 L660.0 465.1 L660.5 465.2 L661.0 465.3 L661.5 464.8 L662.0 465.1 L662.5 465.2 L663.0 465.8 L663.5 466.8 L664.0 466.1 L664.5 466.2 L665.0 465.2 L665.5 465.7 L666.0 465.6 L666.5 465.1 L667.0 465.2 L667.5 465.4 L668.0 466.0 L668.5 466.0 L669.0 464.5 L669.5 465.9 L670.0 466.5 L670.5 466.7 L671.0 466.5 L671.5 466.4 L672.0 465.3 L672.5 464.3 L673.0 464.5 L673.5 465.0 L674.0 465.4 L674.5 465.0 L675.0 464.9 L675.5 464.5 L676.0 463.7 L676.5 463.7 L677.0 464.1 L677.5 464.4 L678.0 464.9 L678.5 465.0 L679.0 464.8 L679.5 464.8 L680.0 464.5 L680.5 464.4 L681.0 464.5 L681.5 464.6 L682.0 464.3 L682.5 464.7 L683.0 464.9 L683.5 465.2 L684.0 464.7 L684.5 464.4 L685.0 463.9 L685.5 463.8 L686.0 463.8 L686.5 464.2 L687.0 464.8 L687.5 463.3 L688.0 464.8 L688.5 465.1 L689.0 464.9 L689.5 464.3 L690.0 465.2 L690.5 465.8 L691.0 465.4 L691.5 465.2 L692.0 465.8 L692.5 465.4 L693.0 465.4 L693.5 465.9 L694.0 466.0 L694.5 465.4 L695.0 465.1 L695.5 465.5 L696.0 465.4 L696.5 465.3 L697.0 465.6 L697.5 465.5 L698.0 465.7 L698.5 465.6 L699.0 466.0 L699.5 465.8 L700.0 465.6 L700.5 465.5 L701.0 465.5 L701.5 465.9 L702.0 466.2 L702.5 465.6 L703.0 465.0 L703.5 465.1 L704.0 465.9 L704.5 465.4 L705.0 465.2 L705.5 465.0 L706.0 464.6 L706.5 464.7 L707.0 464.6 L707.5 465.6 L708.0 465.3 L708.5 464.9 L709.0 465.2 L709.5 465.1 L710.0 465.8 L710.5 465.8 L711.0 465.4 L711.5 465.7 L712.0 465.8 L712.5 466.4 L713.0 466.5 L713.5 466.8 L714.0 467.0 L714.5 466.3 L715.0 466.9 L715.5 466.2 L716.0 466.0 L716.5 466.2 L717.0 466.4 L717.5 467.3 L718.0 466.4 L718.5 466.4 L719.0 465.5 L719.5 465.3 L720.0 465.9 L720.5 466.7 L721.0 467.2 L721.5 467.1 L722.0 466.8 L722.5 467.1 L723.0 466.6 L723.5 467.0 L724.0 466.3 L724.5 466.5 L725.0 466.9 L725.5 466.5 L726.0 466.4 L726.5 466.2 L727.0 465.6 L727.5 466.5 L728.0 466.9 L728.5 466.5 L729.0 466.5 L729.5 466.6 L730.0 467.4 L730.5 467.3 L731.0 467.0 L731.5 467.1 L732.0 467.2 L732.5 467.3 L733.0 466.4 L733.5 466.8 L734.0 466.1 L734.5 466.0 L735.0 466.4 L735.5 466.6 L736.0 466.2 L736.5 466.2 L737.0 466.0 L737.5 465.4 L738.0 465.5 L738.5 466.2 L739.0 465.5 L739.5 466.7 L740.0 467.1 L740.5 467.5 L741.0 467.9 L741.5 467.3 L742.0 468.5 L742.5 467.9 L743.0 467.7 L743.5 467.3 L744.0 466.7 L744.5 466.9 L745.0 467.1 L745.5 467.7 L746.0 467.5 L746.5 466.9 L747.0 467.2 L747.5 467.0 L748.0 467.4 L748.5 466.7 L749.0 466.3 L749.5 467.1 L750.0 466.6 L750.5 466.4 L751.0 466.8 L751.5 466.5 L752.0 467.2 L752.5 467.7 L753.0 468.3 L753.5 467.6 L754.0 467.6 L754.5 466.8 L755.0 467.4 L755.5 467.3 L756.0 467.9 L756.5 467.9 L757.0 467.2 L757.5 466.9 L758.0 467.6 L758.5 468.0 L759.0 467.8 L759.5 467.8 L760.0 468.5 L760.5 467.4 L761.0 468.1 L761.5 467.9 L762.0 467.3 L762.5 467.8 L763.0 467.5 L763.5 468.0 L764.0 468.2 L764.5 468.3 L765.0 468.7 L765.5 468.8 L766.0 468.3 L766.5 468.1 L767.0 468.3 L767.5 467.8 L768.0 467.3 L768.5 466.9 L769.0 466.6 L769.5 467.2 L770.0 467.8 L770.5 468.1 L771.0 468.1 L771.5 467.2 L772.0 466.7 L772.5 467.4 L773.0 468.2 L773.5 467.8 L774.0 467.9 L774.5 467.7 L775.0 468.2 L775.5 467.5 L776.0 467.8 L776.5 468.2 L777.0 468.1 L777.5 466.8 L778.0 449.3 L778.4 404.3 L778.5 405.5 L779.0 419.1 L779.5 436.0 L780.0 449.8 L780.5 458.9 L781.0 463.4 L781.5 466.7 L782.0 468.4 L782.5 468.9 L783.0 468.7 L783.5 469.5" fill="none" stroke="#1f1fee" stroke-width="1.3" stroke-linejoin="round"/><rect x="401.3" y="495.2" width="6.2" height="6.2" fill="#1a1aee"/><rect x="463.1" y="495.2" width="6.2" height="6.2" fill="#3a9160"/></svg>
<header>
<a class="t" style="top:6.91px;font-size:13.10px;font-weight:400;color:#fff;font-style:italic;left:4.00px;transform:scaleX(0.8969);transform-origin:0 0;-webkit-text-stroke:0.35px #fff;">LinkWare</a>
<a class="t" style="top:8.63px;font-size:2.80px;font-weight:400;color:#d5dbe8;left:53.00px;">™</a>
<a class="t" style="top:6.91px;font-size:13.10px;font-weight:400;color:#fff;font-style:italic;left:56.70px;transform:scaleX(0.8572);transform-origin:0 0;-webkit-text-stroke:0.2px #fff;">Live</a>
<a class="t" style="top:7.89px;font-size:8.75px;font-weight:400;color:#eef1f6;left:96.30px;letter-spacing:-0.084px;">PROJECTS</a>
<a class="t" style="top:7.89px;font-size:8.75px;font-weight:400;color:#eef1f6;left:161.00px;letter-spacing:-0.072px;">INTERNAL USERS</a>
<a class="t" style="top:7.89px;font-size:8.75px;font-weight:400;color:#eef1f6;left:254.20px;letter-spacing:-0.066px;">ASSETS</a>
<a class="t" style="top:7.89px;font-size:8.75px;font-weight:400;color:#eef1f6;left:307.00px;letter-spacing:0.047px;">HELP</a>
<div class="t" style="top:7.95px;font-size:8.80px;font-weight:700;color:#fff;left:925.70px;letter-spacing:0.492px;">Robert Pokorny</div>
</header>
<section>
<div class="t" style="top:42.46px;font-size:12.80px;font-weight:400;color:#e9eef5;left:10.50px;letter-spacing:0.218px;">Robert TAC Training Final</div>
<div class="t" style="top:38.68px;font-size:6.76px;font-weight:400;color:#b9c9dd;left:710.10px;letter-spacing:0.111px;">LAST UPDATED:</div>
<div class="t" style="top:48.99px;font-size:8.05px;font-weight:700;color:#eef2f7;left:672.30px;letter-spacing:-0.097px;">Oct 9, 2018, 10:51:19 AM</div>
<div class="t" style="top:38.24px;font-size:6.80px;font-weight:400;color:#b9c9dd;left:926.90px;letter-spacing:0.106px;">START DATE:</div>
<div class="t" style="top:50.44px;font-size:6.80px;font-weight:400;color:#b9c9dd;left:934.80px;letter-spacing:0.044px;">END DATE:</div>
<div class="t" style="top:36.69px;font-size:8.05px;font-weight:700;color:#eef2f7;left:973.90px;letter-spacing:-0.093px;">Sep 16, 2018</div>
<div class="t" style="top:48.89px;font-size:8.05px;font-weight:700;color:#eef2f7;left:973.90px;letter-spacing:-0.093px;">Sep 21, 2018</div>
<div class="t" style="top:53.60px;font-size:13.00px;font-weight:400;color:#3a3a3a;left:823.90px;letter-spacing:-0.516px;">67%</div>
</section>
<nav>
<a class="t" style="top:75.32px;font-size:8.60px;font-weight:400;color:#58799f;left:22.50px;letter-spacing:-0.022px;">SUBPROJECTS</a>
<a class="t" style="top:75.32px;font-size:8.60px;font-weight:400;color:#58799f;left:106.30px;letter-spacing:-0.029px;">TEAM MEMBERS</a>
<a class="t" style="top:75.32px;font-size:8.60px;font-weight:400;color:#58799f;left:196.30px;letter-spacing:-0.019px;">TEST SETUPS</a>
<a class="t" style="top:75.32px;font-size:8.60px;font-weight:400;color:#58799f;left:274.90px;letter-spacing:-0.100px;">RESULTS</a>
<a class="t" style="top:75.32px;font-size:8.60px;font-weight:400;color:#58799f;left:334.00px;letter-spacing:-0.112px;">SETTINGS</a>
</nav>
<aside>
<div class="t" style="top:99.42px;font-size:8.60px;font-weight:400;color:#4b8bc0;left:9.00px;letter-spacing:0.014px;">« Back to all results</div>
<div class="t" style="top:118.02px;font-size:8.60px;font-weight:700;color:#222;left:9.00px;letter-spacing:-0.142px;">1004</div>
<div class="t" style="top:142.52px;font-size:8.60px;font-weight:400;color:#444;left:9.00px;letter-spacing:0.015px;">Cable Type: OM3 Multimode 50</div>
<div class="t" style="top:154.92px;font-size:8.60px;font-weight:400;color:#444;left:9.00px;letter-spacing:0.014px;">Test Limit: Multiple limits</div>
<div class="t" style="top:167.02px;font-size:8.60px;font-weight:400;color:#444;left:9.00px;letter-spacing:0.014px;">Test Date: Sep 16, 2018, 8:33:52 PM</div>
<div class="t" style="top:190.05px;font-size:7.38px;font-weight:400;color:#777;left:14.00px;letter-spacing:-0.120px;">TESTS</div>
<div class="t" style="top:212.12px;font-size:8.60px;font-weight:400;color:#444;left:13.80px;letter-spacing:-0.078px;">OTDR End 1</div>
<div class="t" style="top:212.12px;font-size:8.60px;font-weight:400;color:#444;left:148.80px;letter-spacing:0.046px;">0.36 dB</div>
<div class="t" style="top:213.17px;font-size:7.00px;font-weight:700;color:#fff;left:221.00px;letter-spacing:0.384px;">PASS</div>
<div class="t" style="top:237.42px;font-size:8.60px;font-weight:400;color:#444;left:13.80px;letter-spacing:-0.023px;">OTDR End 2</div>
<div class="t" style="top:237.42px;font-size:8.60px;font-weight:400;color:#444;left:148.80px;letter-spacing:0.046px;">0.26 dB</div>
<div class="t" style="top:238.47px;font-size:7.00px;font-weight:700;color:#fff;left:221.00px;letter-spacing:0.384px;">PASS</div>
<div class="t" style="top:262.72px;font-size:8.60px;font-weight:400;color:#444;left:13.80px;letter-spacing:-0.003px;">OTDR Bidirectional</div>
<div class="t" style="top:262.72px;font-size:8.60px;font-weight:400;color:#444;left:148.80px;letter-spacing:0.046px;">0.31 dB</div>
<div class="t" style="top:263.77px;font-size:7.00px;font-weight:700;color:#fff;left:221.00px;letter-spacing:0.384px;">PASS</div>
<div class="t" style="top:288.02px;font-size:8.60px;font-weight:400;color:#444;left:13.80px;letter-spacing:0.017px;">Loss/Length</div>
<div class="t" style="top:288.02px;font-size:8.60px;font-weight:400;color:#444;left:148.80px;letter-spacing:0.046px;">0.37 dB</div>
<div class="t" style="top:289.07px;font-size:7.00px;font-weight:700;color:#fff;left:221.00px;letter-spacing:0.384px;">PASS</div>
</aside>
<main>
<div class="t" style="top:109.25px;font-size:14.00px;font-weight:700;color:#2f5f96;left:303.00px;transform:scaleX(0.9355);transform-origin:0 0;">OTDR End 1</div>
<div class="t" style="top:135.97px;font-size:7.00px;font-weight:700;color:#fff;left:310.00px;letter-spacing:0.384px;">PASS</div>
<div class="t" style="top:155.72px;font-size:8.60px;font-weight:400;color:#444;left:303.00px;letter-spacing:0.019px;">Test Limit: General Fiber RL = 35 dB</div>
<div class="t" style="top:168.32px;font-size:8.60px;font-weight:400;color:#444;left:303.00px;letter-spacing:0.002px;">Test Date: Sep 16, 2018, 8:33:52 PM</div>
<div class="t" style="top:180.72px;font-size:8.60px;font-weight:400;color:#444;left:303.00px;letter-spacing:-0.007px;">Tester: Versiv</div>
<div class="t" style="top:192.92px;font-size:8.60px;font-weight:400;color:#444;left:303.00px;letter-spacing:0.005px;">Module: OFP-QUAD</div>
<div class="t" style="top:224.32px;font-size:8.60px;font-weight:400;color:#58799f;left:330.70px;letter-spacing:-0.031px;">DETAILS</div>
<div class="t" style="top:224.32px;font-size:8.60px;font-weight:700;color:#2f5f96;left:385.90px;letter-spacing:-0.056px;">GRAPHS</div>
</main>
<figure>
<div class="t" style="top:266.02px;font-size:8.60px;font-weight:400;color:#333;left:339.30px;letter-spacing:-0.016px;">dB</div>
<div class="t" style="top:466.19px;font-size:6.15px;font-weight:400;color:#444;right:696.40px;text-align:right;">-1</div>
<div class="t" style="top:447.29px;font-size:6.15px;font-weight:400;color:#444;right:696.40px;text-align:right;">0</div>
<div class="t" style="top:428.39px;font-size:6.15px;font-weight:400;color:#444;right:696.40px;text-align:right;">1</div>
<div class="t" style="top:409.49px;font-size:6.15px;font-weight:400;color:#444;right:696.40px;text-align:right;">2</div>
<div class="t" style="top:390.59px;font-size:6.15px;font-weight:400;color:#444;right:696.40px;text-align:right;">3</div>
<div class="t" style="top:371.69px;font-size:6.15px;font-weight:400;color:#444;right:696.40px;text-align:right;">4</div>
<div class="t" style="top:352.79px;font-size:6.15px;font-weight:400;color:#444;right:696.40px;text-align:right;">5</div>
<div class="t" style="top:333.89px;font-size:6.15px;font-weight:400;color:#444;right:696.40px;text-align:right;">6</div>
<div class="t" style="top:314.99px;font-size:6.15px;font-weight:400;color:#444;right:696.40px;text-align:right;">7</div>
<div class="t" style="top:296.09px;font-size:6.15px;font-weight:400;color:#444;right:696.40px;text-align:right;">8</div>
<div class="t" style="top:277.19px;font-size:6.15px;font-weight:400;color:#444;right:696.40px;text-align:right;">9</div>
<div class="t" style="top:476.09px;font-size:6.15px;font-weight:400;color:#444;left:321.90px;width:40px;text-align:center;">-100</div>
<div class="t" style="top:476.09px;font-size:6.15px;font-weight:400;color:#444;left:356.02px;width:40px;text-align:center;">-80</div>
<div class="t" style="top:476.09px;font-size:6.15px;font-weight:400;color:#444;left:390.14px;width:40px;text-align:center;">-60</div>
<div class="t" style="top:476.09px;font-size:6.15px;font-weight:400;color:#444;left:424.26px;width:40px;text-align:center;">-40</div>
<div class="t" style="top:476.09px;font-size:6.15px;font-weight:400;color:#444;left:458.38px;width:40px;text-align:center;">-20</div>
<div class="t" style="top:476.09px;font-size:6.15px;font-weight:400;color:#444;left:492.50px;width:40px;text-align:center;">0</div>
<div class="t" style="top:476.09px;font-size:6.15px;font-weight:400;color:#444;left:526.62px;width:40px;text-align:center;">20</div>
<div class="t" style="top:476.09px;font-size:6.15px;font-weight:400;color:#444;left:560.74px;width:40px;text-align:center;">40</div>
<div class="t" style="top:476.09px;font-size:6.15px;font-weight:400;color:#444;left:594.86px;width:40px;text-align:center;">60</div>
<div class="t" style="top:476.09px;font-size:6.15px;font-weight:400;color:#444;left:628.98px;width:40px;text-align:center;">80</div>
<div class="t" style="top:476.09px;font-size:6.15px;font-weight:400;color:#444;left:663.10px;width:40px;text-align:center;">100</div>
<div class="t" style="top:476.09px;font-size:6.15px;font-weight:400;color:#444;left:697.22px;width:40px;text-align:center;">120</div>
<div class="t" style="top:476.09px;font-size:6.15px;font-weight:400;color:#444;left:731.34px;width:40px;text-align:center;">140</div>
<div class="t" style="top:456.02px;font-size:8.60px;font-weight:400;color:#333;left:777.60px;letter-spacing:-0.572px;">m</div>
<div class="t" style="top:494.42px;font-size:8.60px;font-weight:400;color:#333;left:333.30px;letter-spacing:-0.072px;">End 1:</div>
<div class="t" style="top:495.24px;font-size:7.40px;font-weight:400;color:#333;left:413.90px;letter-spacing:0.078px;">850</div>
<div class="t" style="top:495.24px;font-size:7.40px;font-weight:400;color:#333;left:476.00px;letter-spacing:0.016px;">1300</div>
</figure>
</body></html>
